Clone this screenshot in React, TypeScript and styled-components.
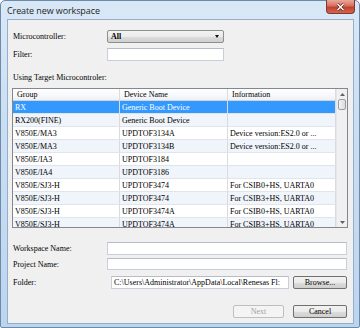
import React from "react";
import styled, { createGlobalStyle } from "styled-components";

const GlobalStyle = createGlobalStyle`
  html, body {
    margin: 0;
    padding: 0;
    width: 360px;
    height: 328px;
    overflow: hidden;
    background: #ffffff;
  }
  * { box-sizing: border-box; }
`;

const Window = styled.div`
  width: 360px;
  height: 328px;
  display: flex;
  flex-direction: column;
  border: 1px solid #6f8aa6;
  border-radius: 5px 5px 2px 2px;
  background: linear-gradient(180deg, #d9e8f7 0%, #c9def3 40%, #bcd5ef 100%);
  padding: 0 5px 3px 6px;
`;

const TitleBar = styled.div`
  height: 18px;
  display: flex;
  align-items: flex-start;
`;

const Title = styled.span`
  font-family: "Open Sans", "Liberation Sans", sans-serif;
  font-size: 9px;
  color: #1e1e1e;
  margin-top: 3px;
  letter-spacing: -0.1px;
`;

const CloseButton = styled.div`
  margin-left: auto;
  margin-right: -1px;
  margin-top: -1px;
  width: 29px;
  height: 14px;
  border: 1px solid #7a3a33;
  border-top: none;
  border-radius: 0 0 4px 4px;
  background: linear-gradient(180deg, #eaa89c 0%, #d7705f 45%, #c3412c 55%, #d4644c 100%);
  display: flex;
  align-items: center;
  justify-content: center;
`;

const Client = styled.div`
  flex: 1;
  display: flex;
  flex-direction: column;
  background: #f0f0f0;
  border: 1px solid #97aecb;
  padding: 10px 6px 0 5px;
  font-family: "Liberation Serif", "DejaVu Serif", serif;
  font-size: 8px;
  color: #000;
`;

const FieldRow = styled.div<{ $top: number; $h?: number; $gap?: number }>`
  display: flex;
  align-items: center;
  gap: ${(p) => p.$gap ?? 0}px;
  margin-top: ${(p) => p.$top}px;
  height: ${(p) => p.$h ?? 13}px;
`;

const Label = styled.span`
  width: 94px;
  flex-shrink: 0;
  white-space: nowrap;
`;

const TextBox = styled.div<{ $w?: number }>`
  ${(p) => (p.$w ? `width: ${p.$w}px;` : "flex: 1;")}
  height: 100%;
  background: #fff;
  border: 1px solid #c9cfd8;
  border-top-color: #b7bdc6;
  display: flex;
  align-items: center;
  padding-left: 2px;
  overflow: hidden;
  white-space: nowrap;
`;

const Select = styled.div`
  width: 117px;
  height: 100%;
  border: 1px solid #8e8f8f;
  border-radius: 2px;
  background: linear-gradient(180deg, #f3f3f3 0%, #ebebeb 50%, #dddddd 51%, #cfcfcf 100%);
  display: flex;
  align-items: center;
  padding: 0 4px 0 3px;
  font-weight: bold;
`;

const Caret = styled.span`
  margin-left: auto;
  width: 0;
  height: 0;
  border-left: 2.5px solid transparent;
  border-right: 2.5px solid transparent;
  border-top: 3px solid #111;
`;

const SectionLabel = styled.div`
  margin-top: 12px;
  height: 10px;
  line-height: 10px;
  white-space: nowrap;
`;

const Table = styled.div`
  margin-top: 5px;
  margin-left: -1px;
  width: 336px;
  height: 140px;
  border: 1px solid #828790;
  display: flex;
  background: #fff;
  overflow: hidden;
`;

const Grid = styled.div`
  flex: 1;
  display: flex;
  flex-direction: column;
  overflow: hidden;
`;

const Row = styled.div<{ $kind: "head" | "sel" | "alt" | "plain" }>`
  display: grid;
  grid-template-columns: 107px 108px 108px;
  flex-shrink: 0;
  height: ${(p) => (p.$kind === "head" ? 12 : 13)}px;
  background: ${(p) =>
    p.$kind === "head"
      ? "linear-gradient(180deg, #ffffff 0%, #f7f8fa 60%, #eef0f4 100%)"
      : p.$kind === "sel"
      ? "#3399ff"
      : p.$kind === "alt"
      ? "#f0f4fb"
      : "#ffffff"};
  color: ${(p) => (p.$kind === "sel" ? "#ffffff" : "#000000")};
  border-bottom: 1px solid ${(p) => (p.$kind === "head" ? "#d5d5d5" : "#e1e4ea")};
`;

const Cell = styled.div<{ $head?: boolean }>`
  padding-left: ${(p) => (p.$head ? 4 : 2)}px;
  border-right: 1px solid ${(p) => (p.$head ? "#dcdcdc" : "#d8dbe2")};
  display: flex;
  align-items: center;
  white-space: nowrap;
  overflow: hidden;
`;

const ScrollBar = styled.div`
  width: 11px;
  flex-shrink: 0;
  display: flex;
  flex-direction: column;
  background: #f0f0f0;
  border-left: 1px solid #e6e6e6;
`;

const ScrollArrow = styled.div`
  height: 10px;
  display: flex;
  align-items: center;
  justify-content: center;
  flex-shrink: 0;
`;

const ScrollThumb = styled.div`
  height: 11px;
  margin: 0 1px;
  border: 1px solid #9a9a9a;
  border-radius: 2px;
  background: linear-gradient(90deg, #f4f4f4, #dcdcdc);
  flex-shrink: 0;
`;

const ScrollSpace = styled.div`
  flex: 1;
`;

const Button = styled.div<{ $disabled?: boolean; $w: number }>`
  width: ${(p) => p.$w}px;
  height: 100%;
  border: 1px solid ${(p) => (p.$disabled ? "#bfbfbf" : "#707070")};
  border-radius: 2px;
  background: ${(p) =>
    p.$disabled
      ? "#f4f4f4"
      : "linear-gradient(180deg, #f2f2f2 0%, #ebebeb 50%, #dddddd 51%, #cfcfcf 100%)"};
  color: ${(p) => (p.$disabled ? "#a0a0a0" : "#000")};
  display: flex;
  align-items: center;
  justify-content: center;
  flex-shrink: 0;
`;

const ButtonBar = styled.div`
  margin-top: 16px;
  height: 13px;
  display: flex;
  justify-content: flex-end;
  gap: 9px;
`;

const rows: [string, string, string][] = [
  ["RX", "Generic Boot Device", ""],
  ["RX200(FINE)", "Generic Boot Device", ""],
  ["V850E/MA3", "UPDTOF3134A", "Device version:ES2.0 or ..."],
  ["V850E/MA3", "UPDTOF3134B", "Device version:ES2.0 or ..."],
  ["V850E/IA3", "UPDTOF3184", ""],
  ["V850E/IA4", "UPDTOF3186", ""],
  ["V850E/SJ3-H", "UPDTOF3474", "For CSIB0+HS, UARTA0"],
  ["V850E/SJ3-H", "UPDTOF3474", "For CSIB3+HS, UARTA0"],
  ["V850E/SJ3-H", "UPDTOF3474A", "For CSIB0+HS, UARTA0"],
  ["V850E/SJ3-H", "UPDTOF3474A", "For CSIB3+HS, UARTA0"],
];

export default function App() {
  return (
    <>
      <GlobalStyle />
      <Window>
        <TitleBar>
          <Title>Create new workspace</Title>
          <CloseButton>
            <svg width="9" height="8" viewBox="0 0 9 8">
              <path d="M1.5 1 L7.5 7 M7.5 1 L1.5 7" stroke="#5a1a12" strokeWidth="2.6" />
              <path d="M1.5 1 L7.5 7 M7.5 1 L1.5 7" stroke="#ffffff" strokeWidth="1.5" />
            </svg>
          </CloseButton>
        </TitleBar>
        <Client>
          <FieldRow $top={0}>
            <Label>Microcontroller:</Label>
            <Select>
              All
              <Caret />
            </Select>
          </FieldRow>
          <FieldRow $top={5}>
            <Label>Filter:</Label>
            <TextBox $w={117} />
          </FieldRow>
          <SectionLabel>Using Target Microcontroler:</SectionLabel>
          <Table>
            <Grid>
              <Row $kind="head">
                <Cell $head>Group</Cell>
                <Cell $head>Device Name</Cell>
                <Cell $head>Information</Cell>
              </Row>
              {rows.map((r, i) => (
                <Row key={i} $kind={i === 0 ? "sel" : i % 2 === 1 ? "alt" : "plain"}>
                  <Cell>{r[0]}</Cell>
                  <Cell>{r[1]}</Cell>
                  <Cell>{r[2]}</Cell>
                </Row>
              ))}
            </Grid>
            <ScrollBar>
              <ScrollArrow>
                <svg width="5" height="3" viewBox="0 0 5 3">
                  <path d="M0 3 L2.5 0 L5 3 Z" fill="#606060" />
                </svg>
              </ScrollArrow>
              <ScrollThumb />
              <ScrollSpace />
              <ScrollArrow>
                <svg width="5" height="3" viewBox="0 0 5 3">
                  <path d="M0 0 L2.5 3 L5 0 Z" fill="#606060" />
                </svg>
              </ScrollArrow>
            </ScrollBar>
          </Table>
          <FieldRow $top={14}>
            <Label>Workspace Name:</Label>
            <TextBox />
          </FieldRow>
          <FieldRow $top={3} $h={12}>
            <Label>Project Name:</Label>
            <TextBox />
          </FieldRow>
          <FieldRow $top={6} $gap={4}>
            <Label>Folder:</Label>
            <TextBox $w={182}>C:\Users\Administrator\AppData\Local\Renesas Fl:</TextBox>
            <Button $w={54}>Browse...</Button>
          </FieldRow>
          <ButtonBar>
            <Button $w={51} $disabled>Next</Button>
            <Button $w={54}>Cancel</Button>
          </ButtonBar>
        </Client>
      </Window>
    </>
  );
}
